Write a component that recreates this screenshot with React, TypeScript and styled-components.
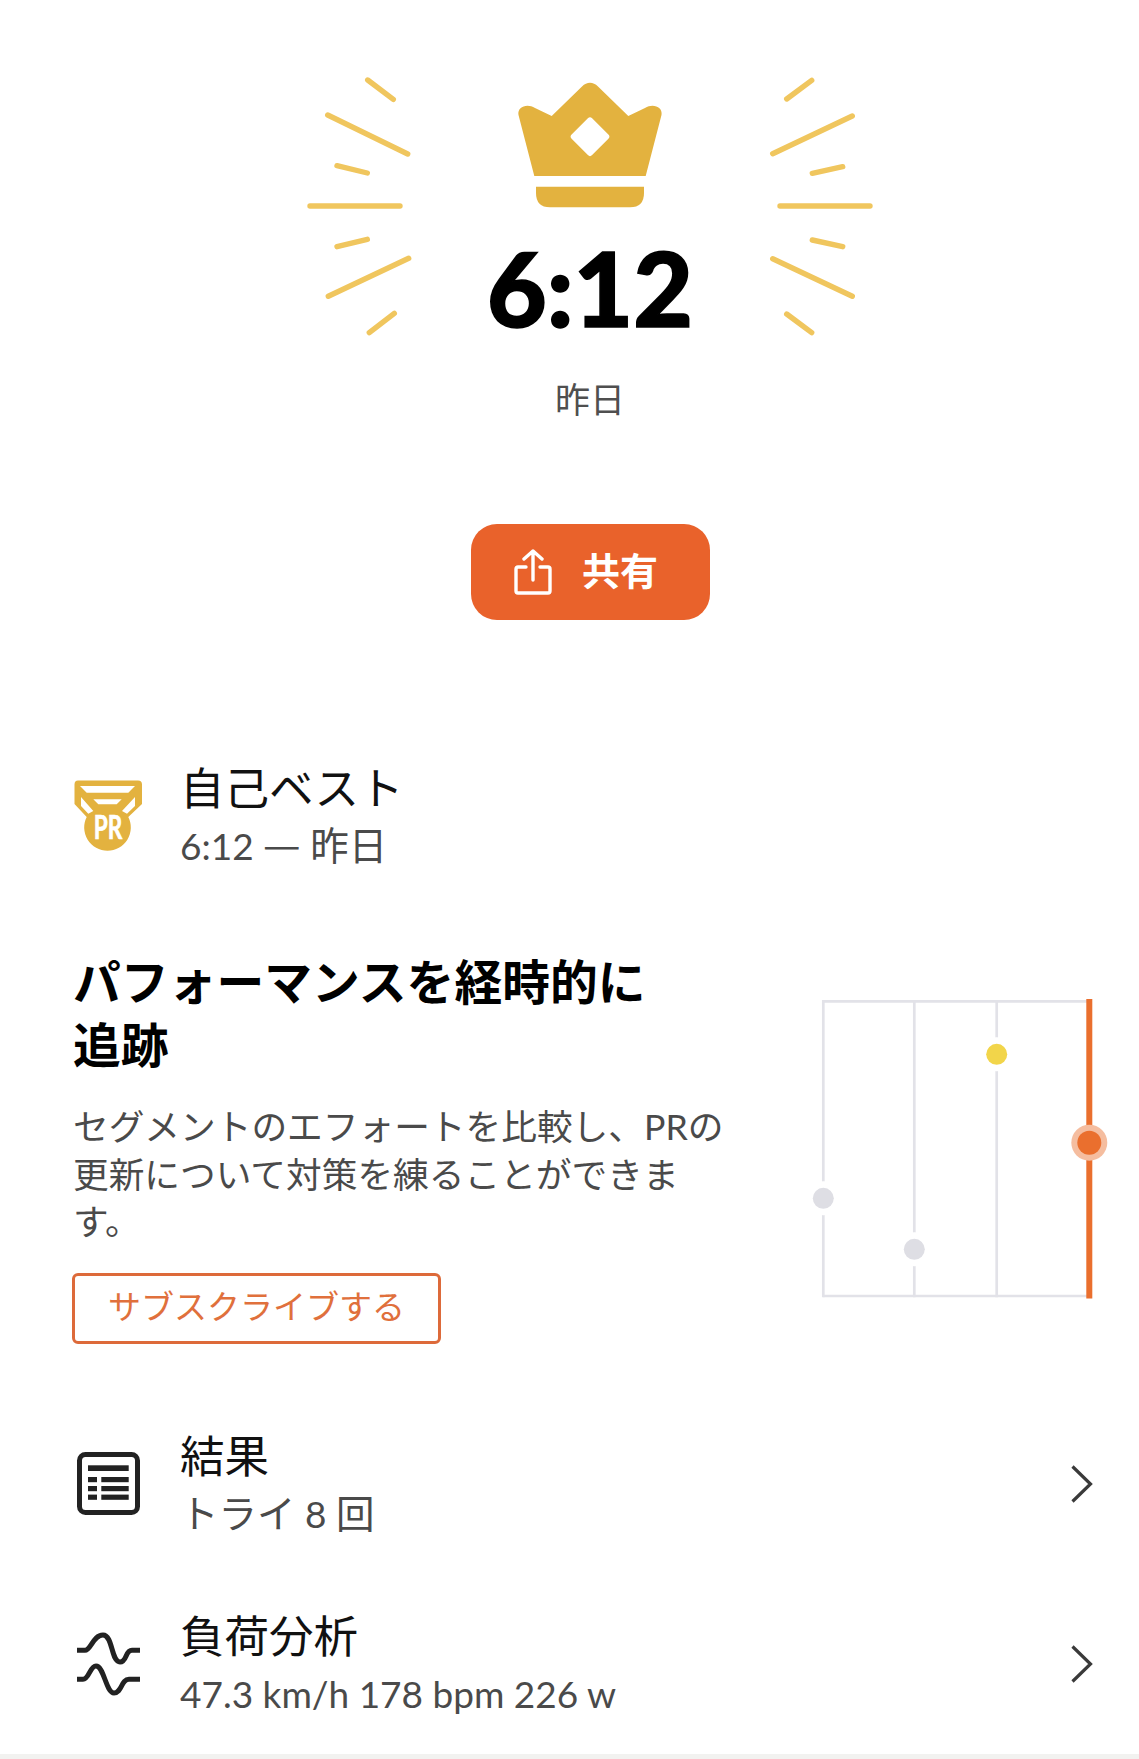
import React from "react";
import styled, { createGlobalStyle } from "styled-components";

const GlobalStyle = createGlobalStyle`
    html, body {
        margin: 0;
        padding: 0;
        background: #fff;
    }
    body {
        font-family: Lato, "Noto Sans CJK JP", sans-serif;
    }
`;

const Page = styled.div`
    width: 1139px;
    height: 1759px;
    overflow: hidden;
    background: #fff;
    display: flex;
    flex-direction: column;
`;

const Hero = styled.section`
    padding: 73px 0 0 41px;
    display: flex;
    flex-direction: column;
    align-items: center;
`;

const HeroRow = styled.div`
    display: flex;
    height: 270px;
`;

const HeroCenter = styled.div`
    width: 350px;
    display: flex;
    flex-direction: column;
    align-items: center;
    padding-top: 7px;
`;

const Time = styled.div`
    font-size: 103px;
    font-weight: 900;
    line-height: 100px;
    color: #000;
    margin-top: 27px;
    -webkit-text-stroke: 1.6px #000;
`;

const DateLabel = styled.div`
    font-size: 35px;
    line-height: 50px;
    color: #4f4f4f;
    margin-top: 31px;
`;

const ShareButton = styled.button`
    width: 239px;
    height: 96px;
    margin-top: 100px;
    border: 0;
    border-radius: 26px;
    background: #e9622b;
    color: #fff;
    font-family: inherit;
    font-weight: 700;
    display: flex;
    align-items: center;
    justify-content: center;
    gap: 30px;
    padding: 0 8px 0 0;
`;

const ShareLabel = styled.span`
    font-size: 38px;
    line-height: 44px;
    margin-top: -5px;
`;

const InfoRow = styled.div<{ $height?: number }>`
    display: flex;
    align-items: center;
    padding: 0 46px 0 73px;
    height: ${p => p.$height ?? 180}px;
`;

const IconSlot = styled.div<{ $inset?: number }>`
    width: 107px;
    flex: none;
    display: flex;
    box-sizing: border-box;
    padding-left: ${p => p.$inset ?? 0}px;
`;

const InfoText = styled.div<{ $nudge?: number }>`
    flex: 1;
    min-width: 0;
    padding-top: ${p => p.$nudge ?? 0}px;
`;

const InfoTitle = styled.div`
    font-size: 44.5px;
    line-height: 58px;
    color: #111;
`;

const InfoSub = styled.div`
    height: 58px;
    font-size: 37px;
    line-height: 58px;
    color: #4a4a4a;
`;

const Cjk = styled.span`
    font-size: 38.5px;
    line-height: 0;
`;

const Dash = styled.span`
    font-family: "Noto Sans CJK JP", sans-serif;
    font-size: 42px;
    line-height: 0;
`;

const PrSection = styled.div`
    margin-top: 139px;
`;

const Promo = styled.section`
    display: flex;
    justify-content: space-between;
    margin-top: 75px;
    padding: 0 29px 0 73px;
`;

const PromoText = styled.div`
    width: 665px;
`;

const PromoTitle = styled.h2`
    width: 590px;
    margin: 0;
    font-size: 47.8px;
    font-weight: 700;
    line-height: 63px;
    color: #000;
`;

const PromoBody = styled.p`
    margin: 27px 0 0;
    font-size: 35.7px;
    line-height: 47.5px;
    color: #4a4a4a;
`;

const SubscribeButton = styled.button`
    display: block;
    width: 369px;
    height: 71px;
    margin: 27px 0 0 -1px;
    padding: 0 0 6px;
    box-sizing: border-box;
    border: 3px solid #dd6a3a;
    border-radius: 6px;
    background: #fff;
    color: #e0703c;
    font-family: inherit;
    font-size: 33px;
`;

const ChartSvg = styled.svg`
    flex: none;
    margin-top: 40px;
`;

const RowList = styled.div`
    margin-top: 50px;
`;

const BottomBand = styled.div`
    height: 6px;
    background: #f2f2f0;
`;

const RAY_LEFT: number[][] = [
    [367.7, 80, 393.3, 99.3],
    [327.7, 115, 407.7, 154],
    [337, 165.7, 367.3, 173],
    [310, 206, 400, 206],
    [337, 246.7, 367.3, 239.3],
    [328.3, 296.3, 408.7, 258.3],
    [369.3, 332.7, 394.3, 313.3],
];

const RAY_RIGHT: number[][] = [
    [811.7, 80.3, 786.7, 99],
    [852.3, 116, 772.7, 153.7],
    [842.7, 166.7, 812.3, 173.3],
    [780, 206, 870, 206],
    [812.3, 240, 842.7, 246.7],
    [772.7, 258.7, 852.3, 296.3],
    [786.7, 314, 811.7, 332.7],
];

const Rays: React.FC<{ rays: number[][]; originX: number }> = ({ rays, originX }) => (
    <svg width="115" height="270" viewBox={`${originX} 73 115 270`}>
        {rays.map((r, i) => (
            <line key={i} x1={r[0]} y1={r[1]} x2={r[2]} y2={r[3]} stroke="#f0c65e" strokeWidth="5.4" strokeLinecap="round" />
        ))}
    </svg>
);

const Crown = () => (
    <svg width="146" height="130" viewBox="0 0 146 130">
        <path
            d="M34.7 36 L65 6.5 C70 1.5 76 1.5 81 6.5 L111.3 36 L128 28 C136 23 146 27 144.5 35 L128.7 96 H17.3 L1.5 35 C0 27 10 23 18 28 Z"
            fill="#e3b23f"
        />
        <rect x="58.5" y="42.2" width="29" height="29" rx="3" fill="#fff" transform="rotate(45 73 56.7)" />
        <path d="M19 106.7 H127 V113 Q127 127.3 113 127.3 H33 Q19 127.3 19 113 Z" fill="#e3b23f" />
    </svg>
);

const ShareIcon = () => (
    <svg width="38" height="46" viewBox="0 0 38 46" fill="none" stroke="#fff" strokeWidth="3.4" strokeLinecap="round" strokeLinejoin="round">
        <path d="M12 18 H4 Q2 18 2 20 V42 Q2 44 4 44 H34 Q36 44 36 42 V20 Q36 18 34 18 H26" />
        <path d="M19 31 V2 M10 10 L19 2 L28 10" />
    </svg>
);

const PrIcon = () => (
    <svg width="70" height="76" viewBox="0 0 70 76">
        <path
            d="M5 1.5 H65 Q69 1.5 69 5.5 V25 L55.3 38 A23.3 23.3 0 1 1 13.7 38 L1.5 25 V5.5 Q1.5 1.5 5 1.5 Z"
            fill="#e3b23f"
        />
        <path d="M7 7 H62 L55.3 13.7 H13.7 Z" fill="#fff" />
        <path d="M8 18 L20.3 32 L15.3 34.7 L8 27 Z M62 18 L49 32 L54 34.7 L62 27 Z" fill="#fff" />
        <path d="M20.3 20.3 H48.7 L43.7 25.3 H25.3 Z" fill="#fff" />
        <text x="35" y="59.5" fill="#fff" stroke="#fff" strokeWidth="0.7" fontSize="32" fontWeight="700" textAnchor="middle" textLength="28.5" lengthAdjust="spacingAndGlyphs">PR</text>
    </svg>
);

const ListIcon = () => (
    <svg width="63" height="63" viewBox="0 0 63 63">
        <rect x="2.5" y="2.5" width="58" height="58" rx="6" fill="none" stroke="#222" strokeWidth="5" />
        <g fill="#222">
            <rect x="11" y="13.3" width="40.7" height="5.7" />
            <rect x="11" y="25" width="9" height="5.2" />
            <rect x="24.3" y="25" width="27.4" height="5.2" />
            <rect x="11" y="34" width="9" height="5.2" />
            <rect x="24.3" y="34" width="27.4" height="5.2" />
            <rect x="11" y="42.6" width="9" height="5.2" />
            <rect x="24.3" y="42.6" width="27.4" height="5.2" />
        </g>
    </svg>
);

const WaveIcon = () => (
    <svg width="63" height="66" viewBox="0 0 63 66" fill="none" stroke="#222" strokeWidth="5">
        <path d="M0 19.3 H8 C14 19.3 16 4 26 4 C36 4 34 31 43 31 C50 31 48 19.3 55 19.3 H63" />
        <path d="M0 48.3 H6 C12 48.3 13 35 19 35 C27 35 29 62 37 62 C45 62 44 48.3 52 48.3 H63" />
    </svg>
);

const Chevron = () => (
    <svg width="22" height="38" viewBox="0 0 22 38" fill="none" stroke="#3a3a3a" strokeWidth="3.2">
        <path d="M1.5 1.5 L19.5 19 L1.5 36.5" />
    </svg>
);

const CHART_LINES = [823.3, 914.3, 996.7];

const CHART_DOTS = [
    { x: 823.3, y: 1198.3, color: "#dedee4" },
    { x: 914.3, y: 1249.3, color: "#dedee4" },
    { x: 996.7, y: 1054.3, color: "#f2d54a" },
];

const Chart = () => (
    <ChartSvg width="300" height="320" viewBox="810 990 300 320">
        <path d="M823.3 1001.3 H1089 M823.3 1296 H1089" stroke="#e2e2e8" strokeWidth="2.7" />
        {CHART_LINES.map(x => (
            <line key={x} x1={x} y1="1000" x2={x} y2="1297.3" stroke="#e2e2e8" strokeWidth="2.7" />
        ))}
        {CHART_DOTS.map(d => (
            <g key={d.x}>
                <circle cx={d.x} cy={d.y} r="17" fill="#fff" />
                <circle cx={d.x} cy={d.y} r="10.5" fill={d.color} />
            </g>
        ))}
        <line x1="1089.3" y1="999" x2="1089.3" y2="1298.5" stroke="#ea6f2e" strokeWidth="6" />
        <circle cx="1089.3" cy="1142.7" r="18" fill="#f5bd9f" />
        <circle cx="1089.3" cy="1142.7" r="12" fill="#ea6f2e" />
    </ChartSvg>
);

const App: React.FC = () => {
    return (
        <Page>
            <GlobalStyle />
            <Hero>
                <HeroRow>
                    <Rays rays={RAY_LEFT} originX={300} />
                    <HeroCenter>
                        <Crown />
                        <Time>6:12</Time>
                    </HeroCenter>
                    <Rays rays={RAY_RIGHT} originX={765} />
                </HeroRow>
                <DateLabel>昨日</DateLabel>
                <ShareButton>
                    <ShareIcon />
                    <ShareLabel>共有</ShareLabel>
                </ShareButton>
            </Hero>
            <PrSection>
                <InfoRow $height={116}>
                    <IconSlot><PrIcon /></IconSlot>
                    <InfoText>
                        <InfoTitle>自己ベスト</InfoTitle>
                        <InfoSub>6:12 <Dash>—</Dash> <Cjk>昨日</Cjk></InfoSub>
                    </InfoText>
                </InfoRow>
            </PrSection>
            <Promo>
                <PromoText>
                    <PromoTitle>パフォーマンスを経時的に追跡</PromoTitle>
                    <PromoBody>セグメントのエフォートを比較し、PRの更新について対策を練ることができます。</PromoBody>
                    <SubscribeButton>サブスクライブする</SubscribeButton>
                </PromoText>
                <Chart />
            </Promo>
            <RowList>
                <InfoRow>
                    <IconSlot $inset={4}><ListIcon /></IconSlot>
                    <InfoText $nudge={3}>
                        <InfoTitle>結果</InfoTitle>
                        <InfoSub><Cjk>トライ</Cjk> 8 <Cjk>回</Cjk></InfoSub>
                    </InfoText>
                    <Chevron />
                </InfoRow>
                <InfoRow>
                    <IconSlot $inset={4}><WaveIcon /></IconSlot>
                    <InfoText $nudge={3}>
                        <InfoTitle>負荷分析</InfoTitle>
                        <InfoSub>47.3 km/h 178 bpm 226 w</InfoSub>
                    </InfoText>
                    <Chevron />
                </InfoRow>
            </RowList>
            <BottomBand />
        </Page>
    );
};

export default App;
